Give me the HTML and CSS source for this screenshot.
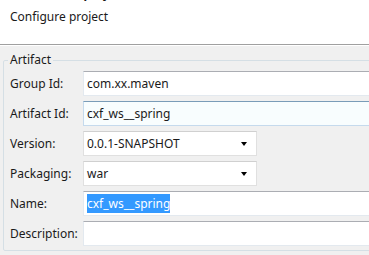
FILE: index.html
```html
<!DOCTYPE html>
<html lang="en">
<head>
    <meta charset="UTF-8">
    <title>New Maven project</title>
    <link rel="stylesheet" href="styles.css">
</head>
<body>
    <div class="header">
        <h1 class="title">New Maven project</h1>
        <p class="subtitle">Configure project</p>
    </div>
    <div class="page">
        <fieldset class="group">
            <legend>Artifact</legend>
            <div class="form">
                <label>Group Id:</label>
                <div class="field">com.xx.maven</div>

                <label>Artifact Id:</label>
                <div class="field focused">cxf_ws__spring</div>

                <label>Version:</label>
                <div class="combo">0.0.1-SNAPSHOT<span class="arrow"></span></div>

                <label>Packaging:</label>
                <div class="combo">war<span class="arrow"></span></div>

                <label>Name:</label>
                <div class="field"><span class="selected">cxf_ws__spring</span></div>

                <label>Description:</label>
                <div class="field"></div>
            </div>
        </fieldset>
    </div>
</body>
</html>
```
FILE: styles.css
```css
body {
    margin: 0;
    font-family: "Noto Sans", "Open Sans", sans-serif;
    font-size: 12px;
    color: #1a1a1a;
    background: #f0f0f0;
    width: 369px;
    height: 255px;
    overflow: hidden;
}
.header {
    background: #fff;
    height: 44px;
    padding-left: 10px;
    border-bottom: 1px solid #a0a0a0;
    box-shadow: 0 1px 0 #fff;
    overflow: hidden;
}
.title {
    margin: -14px 0 0 0;
    font-size: 12px;
    font-weight: bold;
    line-height: 16px;
}
.subtitle {
    margin: 7px 0 0 0;
    line-height: 16px;
}
.page {
    padding-top: 8px;
    overflow: hidden;
}
.group {
    margin: 0 -20px 0 3px;
    padding: 4px 0 4px 6px;
    border: 1px solid #d5dfe5;
    border-radius: 2px;
}
.group legend {
    padding: 0 2px;
    margin-left: -2px;
    line-height: 14px;
}
.form {
    display: grid;
    grid-template-columns: 73px 1fr;
    grid-auto-rows: 25px;
    row-gap: 5px;
    align-items: center;
}
.form label {
    line-height: 16px;
}
.field, .combo {
    box-sizing: border-box;
    height: 25px;
    padding: 3px 3px;
    background: #fff;
    border: 1px solid #e3e9ef;
    border-top-color: #abadb3;
    line-height: 17px;
}
.field.focused {
    border-color: #c5daed;
    border-top-color: #7a9cb8;
    background: #f8fdfe;
}
.combo {
    width: 174px;
    position: relative;
    border-color: #e0e0e0;
    border-top-color: #d0d0d0;
}
.arrow {
    position: absolute;
    right: 9px;
    top: 10px;
    border-left: 3.5px solid transparent;
    border-right: 3.5px solid transparent;
    border-top: 4px solid #000;
}
.selected {
    background: #3399ff;
    color: #fff;
    padding: 1px 0;
}
```
